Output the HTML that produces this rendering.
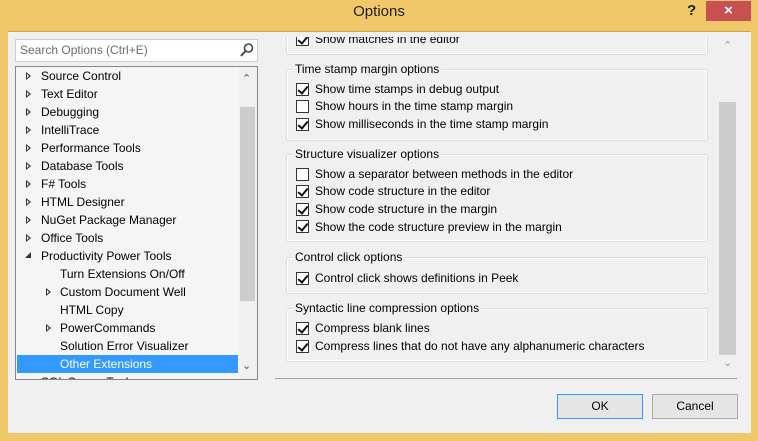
<!DOCTYPE html>
<html><head><style>
*{margin:0;padding:0;box-sizing:border-box}
body{width:758px;height:441px;background:#F0C86A;font-family:"Liberation Sans",sans-serif;font-size:12px;color:#000;position:relative;overflow:hidden}
.a{position:absolute;white-space:nowrap}
#content{position:absolute;left:8px;top:31px;width:743px;height:402px;background:#F0F0F0;border-top:1px solid #C9A64E}
.ti{position:absolute;left:41px;height:18px;line-height:18px}
.tri{position:absolute;width:0;height:0;border-top:4px solid transparent;border-bottom:4px solid transparent;border-left:5px solid #333}
.tri:after{content:"";position:absolute;left:-4px;top:-2px;border-top:2px solid transparent;border-bottom:2px solid transparent;border-left:2.5px solid #fff}
.grp{position:absolute;left:286px;width:422px;border:1px solid #DCDCDC;border-radius:3px;box-shadow:inset 0 0 0 1px #fff}
.gt{position:absolute;left:293px;background:#F0F0F0;padding:0 2px;height:16px;line-height:16px}
.cb{position:absolute;left:296px;width:13px;height:13px;border:1px solid #333;background:#fff}
.cb.c:after{content:"";position:absolute;left:3px;top:0px;width:4px;height:8px;border:solid #111;border-width:0 2px 2px 0;transform:rotate(40deg)}
.lb{position:absolute;left:315px;height:16px;line-height:16px}
</style></head><body>
<div class="a" style="left:0;top:3px;width:758px;text-align:center;font-size:15px;color:#222">Options</div>
<div class="a" style="left:687px;top:2px;font-size:15px;font-weight:bold;color:#222">?</div>
<div class="a" style="left:706px;top:1px;width:45px;height:20px;background:#C75050;color:#fff;text-align:center;font-size:15px;line-height:20px;font-weight:bold">×</div>
<div id="content"></div>
<div class="a" style="left:15px;top:39px;width:243px;height:23px;background:#fff;border:1px solid #CCCEDB;color:#6D6D6D;line-height:21px;padding-left:4px">Search Options (Ctrl+E)</div>
<svg class="a" style="left:239px;top:42px" width="16" height="16"><circle cx="9.5" cy="6" r="4" fill="none" stroke="#444" stroke-width="1.6"/><line x1="6.5" y1="9" x2="2" y2="14" stroke="#444" stroke-width="2"/></svg>
<div class="a" style="left:15px;top:66px;width:243px;height:314px;background:#F5F5F5;border:1px solid #828790;overflow:hidden"></div>
<div class="a" style="left:239px;top:67px;width:18px;height:312px;background:#F0F0F0"></div>
<div class="a" style="left:240px;top:107px;width:15px;height:194px;background:#CDCDCD"></div>
<div class="a" style="left:242px;top:72px;color:#555;font-size:11px">&#8963;</div>
<div class="a" style="left:242px;top:359px;color:#555;font-size:11px">&#8964;</div>
<div class="a" style="left:17px;top:355px;width:221px;height:18px;background:#3399FF"></div>
<div style="position:absolute;left:0;top:0;width:238px;height:379px;overflow:hidden">
<div class="tri" style="left:26px;top:72px"></div><div class="ti" style="top:67px">Source Control</div>
<div class="tri" style="left:26px;top:90px"></div><div class="ti" style="top:85px">Text Editor</div>
<div class="tri" style="left:26px;top:108px"></div><div class="ti" style="top:103px">Debugging</div>
<div class="tri" style="left:26px;top:126px"></div><div class="ti" style="top:121px">IntelliTrace</div>
<div class="tri" style="left:26px;top:144px"></div><div class="ti" style="top:139px">Performance Tools</div>
<div class="tri" style="left:26px;top:162px"></div><div class="ti" style="top:157px">Database Tools</div>
<div class="tri" style="left:26px;top:180px"></div><div class="ti" style="top:175px">F# Tools</div>
<div class="tri" style="left:26px;top:198px"></div><div class="ti" style="top:193px">HTML Designer</div>
<div class="tri" style="left:26px;top:216px"></div><div class="ti" style="top:211px">NuGet Package Manager</div>
<div class="tri" style="left:26px;top:234px"></div><div class="ti" style="top:229px">Office Tools</div>
<div class="a" style="left:25px;top:252px;width:0;height:0;border-left:6px solid transparent;border-bottom:6px solid #333"></div><div class="ti" style="top:247px">Productivity Power Tools</div>
<div class="ti" style="top:265px;left:60px">Turn Extensions On/Off</div>
<div class="tri" style="left:46px;top:288px"></div><div class="ti" style="top:283px;left:60px">Custom Document Well</div>
<div class="ti" style="top:301px;left:60px">HTML Copy</div>
<div class="tri" style="left:46px;top:324px"></div><div class="ti" style="top:319px;left:60px">PowerCommands</div>
<div class="ti" style="top:337px;left:60px">Solution Error Visualizer</div>
<div class="ti" style="top:355px;left:60px;color:#fff">Other Extensions</div>
<div class="ti" style="top:373px">SQL Server Tools</div>
</div>
<div style="position:absolute;left:270px;top:37px;width:470px;height:335px;overflow:hidden">
 <div style="position:absolute;left:-270px;top:-37px;width:758px;height:441px">
  <div class="grp" style="top:10px;height:45px"></div>
  <div class="cb c" style="top:33px"></div><div class="lb" style="top:31px">Show matches in the editor</div>

  <div class="grp" style="top:69px;height:72px"></div>
  <div class="gt" style="top:61px">Time stamp margin options</div>
  <div class="cb c" style="top:83px"></div><div class="lb" style="top:81px">Show time stamps in debug output</div>
  <div class="cb" style="top:100px"></div><div class="lb" style="top:98px">Show hours in the time stamp margin</div>
  <div class="cb c" style="top:118px"></div><div class="lb" style="top:116px">Show milliseconds in the time stamp margin</div>

  <div class="grp" style="top:154px;height:88px"></div>
  <div class="gt" style="top:146px">Structure visualizer options</div>
  <div class="cb" style="top:168px"></div><div class="lb" style="top:166px">Show a separator between methods in the editor</div>
  <div class="cb c" style="top:185px"></div><div class="lb" style="top:183px">Show code structure in the editor</div>
  <div class="cb c" style="top:203px"></div><div class="lb" style="top:201px">Show code structure in the margin</div>
  <div class="cb c" style="top:220px"></div><div class="lb" style="top:219px">Show the code structure preview in the margin</div>

  <div class="grp" style="top:257px;height:37px"></div>
  <div class="gt" style="top:249px">Control click options</div>
  <div class="cb c" style="top:272px"></div><div class="lb" style="top:270px">Control click shows definitions in Peek</div>

  <div class="grp" style="top:308px;height:54px"></div>
  <div class="gt" style="top:300px">Syntactic line compression options</div>
  <div class="cb c" style="top:322px"></div><div class="lb" style="top:320px">Compress blank lines</div>
  <div class="cb c" style="top:340px"></div><div class="lb" style="top:338px">Compress lines that do not have any alphanumeric characters</div>
 </div>
</div>
<div class="a" style="left:723px;top:39px;color:#999;font-size:11px">&#8963;</div>
<div class="a" style="left:719px;top:102px;width:17px;height:253px;background:#CDCDCD"></div>
<div class="a" style="left:723px;top:356px;color:#999;font-size:11px">&#8964;</div>
<div class="a" style="left:275px;top:378px;width:462px;height:1px;background:#A0A0A0"></div>
<div class="a" style="left:557px;top:394px;width:86px;height:25px;border:1px solid #3399FF;background:#E5E5E5;text-align:center;line-height:23px">OK</div>
<div class="a" style="left:652px;top:394px;width:86px;height:25px;border:1px solid #ACACAC;background:#E5E5E5;text-align:center;line-height:23px">Cancel</div>
</body></html>
